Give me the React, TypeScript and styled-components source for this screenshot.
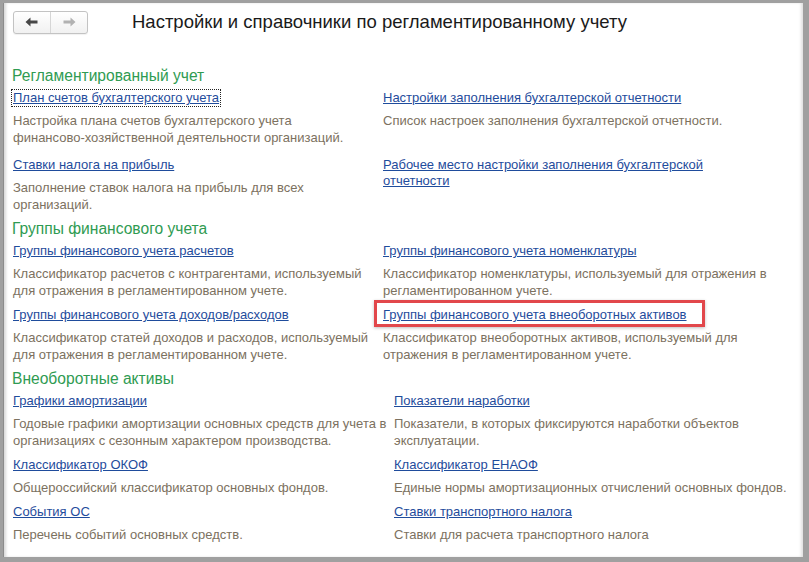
import React from "react"
import styled, { createGlobalStyle } from "styled-components"

type Entry = {
  title: string
  text: string
  focused?: boolean
  marked?: boolean
}

type Section = {
  title: string
  left: number
  gap: number
  right: number
  rowGap: number
  rows: [Entry, Entry][]
}

const sections: Section[] = [
  {
    title: "Регламентированный учет",
    left: 364,
    gap: 6,
    right: 388,
    rowGap: 11,
    rows: [
      [
        {
          title: "План счетов бухгалтерского учета",
          text: "Настройка плана счетов бухгалтерского учета финансово\u2011хозяйственной деятельности организаций.",
          focused: true,
        },
        {
          title: "Настройки заполнения бухгалтерской отчетности",
          text: "Список настроек заполнения бухгалтерской отчетности.",
        },
      ],
      [
        {
          title: "Ставки налога на прибыль",
          text: "Заполнение ставок налога на прибыль для всех организаций.",
        },
        {
          title: "Рабочее место настройки заполнения бухгалтерской отчетности",
          text: "",
        },
      ],
    ],
  },
  {
    title: "Группы финансового учета",
    left: 364,
    gap: 6,
    right: 388,
    rowGap: 8,
    rows: [
      [
        {
          title: "Группы финансового учета расчетов",
          text: "Классификатор расчетов с контрагентами, используемый для отражения в регламентированном учете.",
        },
        {
          title: "Группы финансового учета номенклатуры",
          text: "Классификатор номенклатуры, используемый для отражения в регламентированном учете.",
        },
      ],
      [
        {
          title: "Группы финансового учета доходов/расходов",
          text: "Классификатор статей доходов и расходов, используемый для отражения в регламентированном учете.",
        },
        {
          title: "Группы финансового учета внеоборотных активов",
          text: "Классификатор внеоборотных активов, используемый для отражения в регламентированном учете.",
          marked: true,
        },
      ],
    ],
  },
  {
    title: "Внеоборотные активы",
    left: 381,
    gap: 0,
    right: 402,
    rowGap: 8,
    rows: [
      [
        {
          title: "Графики амортизации",
          text: "Годовые графики амортизации основных средств для учета в организациях с сезонным характером производства.",
        },
        {
          title: "Показатели наработки",
          text: "Показатели, в которых фиксируются наработки объектов эксплуатации.",
        },
      ],
      [
        {
          title: "Классификатор ОКОФ",
          text: "Общероссийский классификатор основных фондов.",
        },
        {
          title: "Классификатор ЕНАОФ",
          text: "Единые нормы амортизационных отчислений основных фондов.",
        },
      ],
      [
        {
          title: "События ОС",
          text: "Перечень событий основных средств.",
        },
        {
          title: "Ставки транспортного налога",
          text: "Ставки для расчета транспортного налога",
        },
      ],
    ],
  },
]

const GlobalStyle = createGlobalStyle`
  html, body {
    margin: 0;
    padding: 0;
    background: #a0a0a0;
  }
  body {
    font-family: "Liberation Sans", Arial, sans-serif;
  }
`

const App: React.FC = () => {
  return (
    <>
      <GlobalStyle />
      <Window>
        <TopBar>
          <NavGroup>
            <NavButton aria-label="Назад">
              <svg width="16" height="12" viewBox="0 0 16 12">
                <path d="M1.5 6 L6.5 1.5 V4.4 H13.5 V7.6 H6.5 V10.5 Z" fill="#474747" />
              </svg>
            </NavButton>
            <NavButton aria-label="Вперед">
              <svg width="16" height="12" viewBox="0 0 16 12">
                <path d="M14.5 6 L9.5 1.5 V4.4 H2.5 V7.6 H9.5 V10.5 Z" fill="#b2b2b2" />
              </svg>
            </NavButton>
          </NavGroup>
          <Title>Настройки и справочники по регламентированному учету</Title>
        </TopBar>

        <Content>
          {sections.map((section) => (
            <SectionBlock key={section.title}>
              <SectionTitle>{section.title}</SectionTitle>
              <Grid
                $left={section.left}
                $gap={section.gap}
                $right={section.right}
                $rowGap={section.rowGap}
              >
                {section.rows.map((row) =>
                  row.map((entry) => (
                    <Item key={entry.title}>
                      <LinkWrap $marked={entry.marked}>
                        <ItemLink href="#" $focused={entry.focused}>
                          {entry.title}
                        </ItemLink>
                      </LinkWrap>
                      {entry.text && <Description>{entry.text}</Description>}
                    </Item>
                  ))
                )}
              </Grid>
            </SectionBlock>
          ))}
        </Content>
      </Window>
    </>
  )
}

export default App

const Window = styled.div`
  margin: 3px 6px 5px 3px;
  height: 554px;
  background: #ffffff;
  box-shadow:
    inset 3px 0 3px -1px #d8d8d8,
    inset -3px 0 3px -1px #e0e0e0;
  border-left: 1px solid #8c8c8c;
  box-sizing: border-box;
  overflow: hidden;
`

const TopBar = styled.div`
  display: flex;
  align-items: center;
  padding: 6px 0 0 9px;
  height: 26px;
`

const NavGroup = styled.div`
  display: flex;
  height: 23px;
  border: 1px solid #c3c3c3;
  border-radius: 3px;
  background: linear-gradient(#ffffff, #f1f1f1);
  box-shadow: 0 1px 1px rgba(0, 0, 0, 0.06);
  box-sizing: border-box;
`

const NavButton = styled.div`
  width: 36px;
  display: flex;
  align-items: center;
  justify-content: center;

  & + & {
    border-left: 1px solid #d6d6d6;
  }
`

const Title = styled.h1`
  margin: 0 0 0 44px;
  font-size: 18.5px;
  font-weight: normal;
  color: #1a1a1a;
  white-space: nowrap;
`

const Content = styled.div`
  padding: 31px 0 0 8px;
`

const SectionBlock = styled.section`
  margin-bottom: 6px;
`

const SectionTitle = styled.h2`
  margin: 0 0 4px 0;
  font-size: 15.6px;
  line-height: 20px;
  font-weight: normal;
  color: #2f9b52;
`

const Grid = styled.div<{ $left: number; $gap: number; $right: number; $rowGap: number }>`
  display: grid;
  grid-template-columns: ${(p) => p.$left}px ${(p) => p.$right}px;
  column-gap: ${(p) => p.$gap}px;
  row-gap: ${(p) => p.$rowGap}px;
`

const Item = styled.div`
  display: flex;
  flex-direction: column;
  align-items: flex-start;
`

const LinkWrap = styled.div<{ $marked?: boolean }>`
  position: relative;
  display: flex;

  ${(p) =>
    p.$marked &&
    `
    &::after {
      content: "";
      position: absolute;
      left: -8px;
      right: -17px;
      top: -7px;
      bottom: -4px;
      border: 3px solid #e2474b;
      box-shadow: 0 1px 3px rgba(0, 0, 0, 0.25);
      pointer-events: none;
    }
  `}
`

const ItemLink = styled.a<{ $focused?: boolean }>`
  display: block;
  font-size: 13px;
  line-height: 16px;
  color: #1f4c9c;
  text-decoration: underline;
  padding: 0 1px;
  outline: ${(p) => (p.$focused ? "1px dotted #222" : "none")};
`

const Description = styled.div`
  margin-top: 6px;
  padding-left: 1px;
  font-size: 13px;
  line-height: 17px;
  color: #7c7160;
`
